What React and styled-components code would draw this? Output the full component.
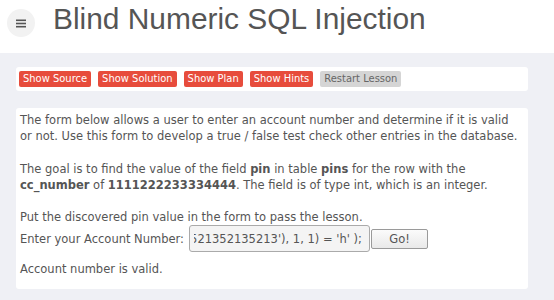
import React, { useLayoutEffect, useRef } from "react";
import styled, { createGlobalStyle } from "styled-components";

const GlobalStyle = createGlobalStyle`
	html, body {
		margin: 0;
		padding: 0;
		background: #eff0f5;
		font-family: "DejaVu Sans", sans-serif;
	}
`;

const Page = styled.div`
	width: 554px;
	height: 300px;
	overflow: hidden;
	background: #eff0f5;
`;

const Header = styled.header`
	display: flex;
	align-items: flex-start;
	height: 53px;
	background: #fff;
`;

const MenuButton = styled.button`
	display: flex;
	align-items: center;
	justify-content: center;
	width: 28px;
	height: 28px;
	margin: 9px 18px 0 7px;
	padding: 0;
	border: none;
	border-radius: 50%;
	background: #f2f2f2;
	color: #555;
`;

const Title = styled.h1`
	margin: 1px 0 0;
	font-family: "Liberation Sans", Arial, sans-serif;
	font-weight: 400;
	font-size: 29.9px;
	line-height: 36px;
	color: #555;
`;

const Main = styled.main`
	padding: 14px 26px 0 16px;
`;

const Panel = styled.section`
	background: #fff;
	border-radius: 3px;
`;

const ButtonBar = styled(Panel)`
	display: flex;
	gap: 7px;
	padding: 4px 3px;
`;

const LessonButton = styled.button`
	height: 16px;
	padding: 0 4px;
	border: none;
	border-radius: 2px;
	font-family: "DejaVu Sans", sans-serif;
	font-size: 9.95px;
	line-height: 16px;
	background: ${(p) => (p.$muted ? "#d5d5d5" : "#e74c3c")};
	color: ${(p) => (p.$muted ? "#666" : "#fff")};
`;

const Content = styled(Panel)`
	margin-top: 17px;
	padding: 4px 10px 12px 4px;
	color: #555;
	font-size: 11.5px;
	line-height: 16px;
`;

const Para = styled.p`
	margin: 0 0 ${(p) => p.$gap ?? 17}px;
`;

const FormRow = styled.form`
	display: flex;
	align-items: center;
	margin: 0 0 9px;
`;

const AccountInput = styled.input`
	box-sizing: border-box;
	width: 181px;
	height: 27px;
	margin-left: 5px;
	padding: 0 7px 0 4px;
	border: 1px solid #aaa;
	border-radius: 3px;
	background: #f4f4f4;
	font-family: "DejaVu Sans", sans-serif;
	font-size: 11.5px;
	color: #555;
`;

const GoButton = styled.button`
	box-sizing: border-box;
	width: 57px;
	height: 20px;
	margin-left: 1px;
	padding: 0;
	border: 1px solid #9a9a9a;
	border-radius: 2px;
	background: linear-gradient(#fbfbfb, #e9e9e9);
	font-family: "DejaVu Sans", sans-serif;
	font-size: 11.5px;
	color: #555;
`;

const injection =
	"101 AND (SUBSTRING((SELECT name FROM pins WHERE cc_number='5213521352135213'), 1, 1) = 'h' );";

function MenuIcon() {
	return (
		<svg width="10" height="9" viewBox="0 0 10 9" fill="currentColor">
			<rect x="0" y="0.5" width="10" height="1.6" />
			<rect x="0" y="3.7" width="10" height="1.6" />
			<rect x="0" y="6.9" width="10" height="1.6" />
		</svg>
	);
}

export default function App() {
	const inputRef = useRef(null);

	useLayoutEffect(() => {
		const el = inputRef.current;
		if (el) el.scrollLeft = el.scrollWidth;
	}, []);

	return (
		<Page>
			<GlobalStyle />
			<Header>
				<MenuButton aria-label="menu">
					<MenuIcon />
				</MenuButton>
				<Title>Blind Numeric SQL Injection</Title>
			</Header>
			<Main>
				<ButtonBar>
					<LessonButton>Show Source</LessonButton>
					<LessonButton>Show Solution</LessonButton>
					<LessonButton>Show Plan</LessonButton>
					<LessonButton>Show Hints</LessonButton>
					<LessonButton $muted>Restart Lesson</LessonButton>
				</ButtonBar>
				<Content>
					<Para>
						The form below allows a user to enter an account number and determine if it is valid
						or not. Use this form to develop a true / false test check other entries in the database.
					</Para>
					<Para $gap={16}>
						The goal is to find the value of the field <b>pin</b> in table <b>pins</b> for the row
						with the <b>cc_number</b> of <b>1111222233334444</b>. The field is of type int, which is
						an integer.
					</Para>
					<Para $gap={0}>Put the discovered pin value in the form to pass the lesson.</Para>
					<FormRow onSubmit={(e) => e.preventDefault()}>
						<span>Enter your Account Number:</span>
						<AccountInput ref={inputRef} defaultValue={injection} />
						<GoButton type="submit">Go!</GoButton>
					</FormRow>
					<Para $gap={0}>Account number is valid.</Para>
				</Content>
			</Main>
		</Page>
	);
}
